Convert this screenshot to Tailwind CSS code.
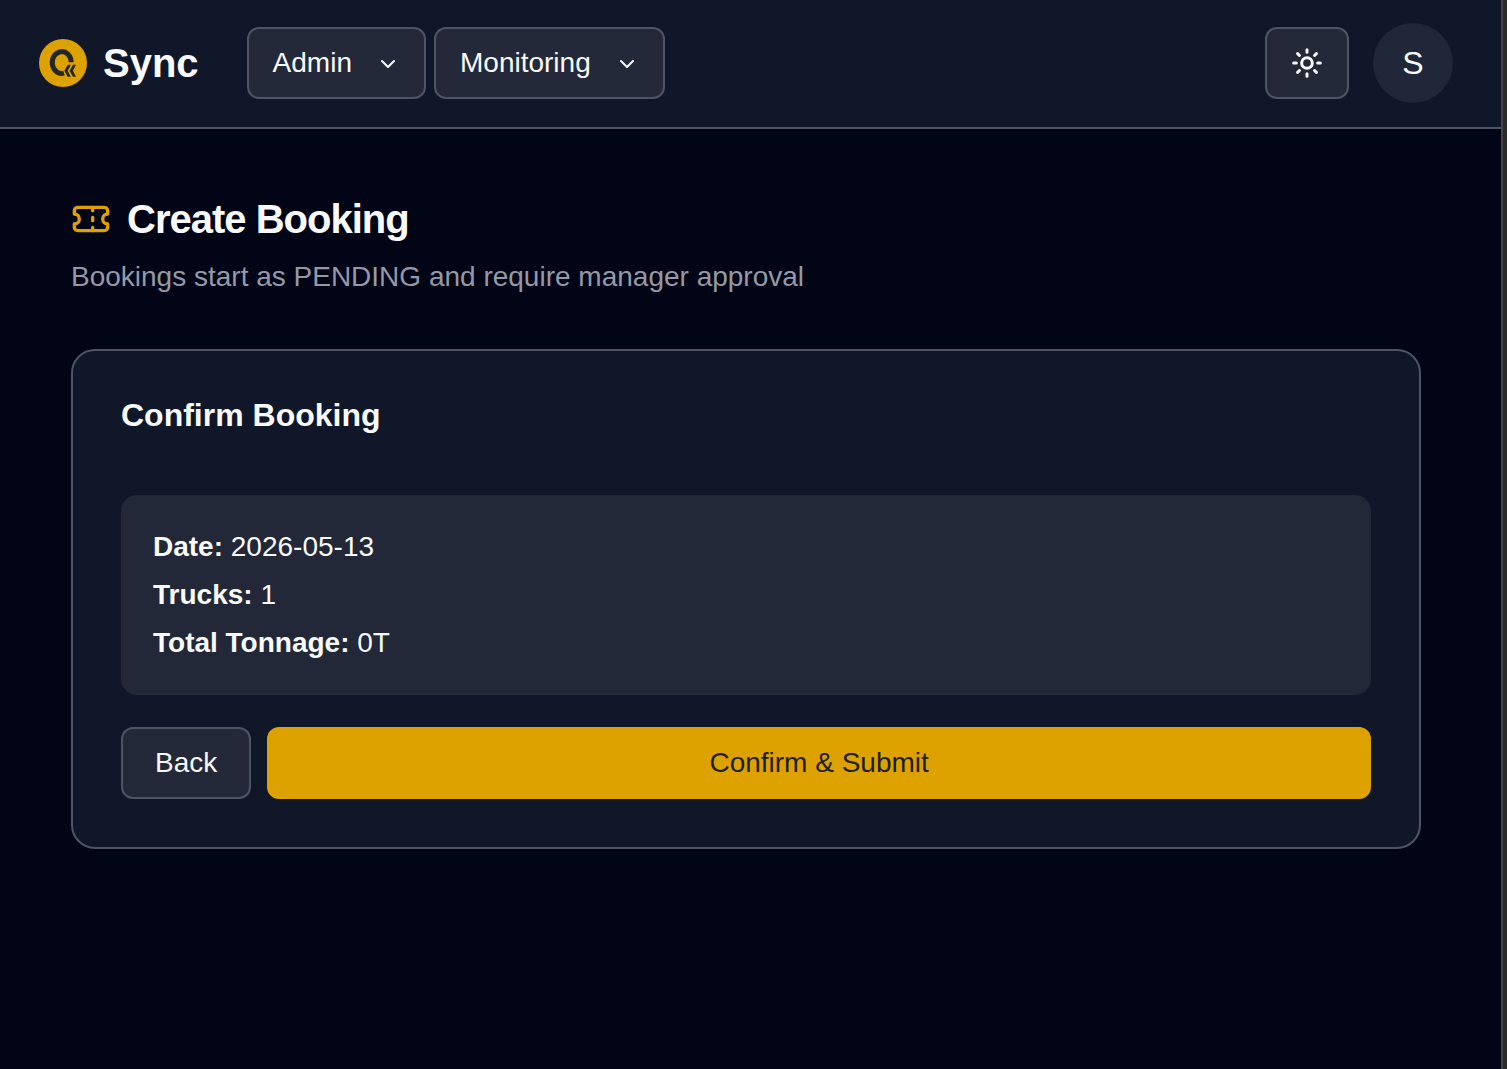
<!DOCTYPE html>
<html lang="en">
<head>
  <meta charset="UTF-8">
  <meta name="viewport" content="width=device-width, initial-scale=1.0">
  <title>Create Booking - Sync</title>
  <script src="https://cdn.jsdelivr.net/npm/@tailwindcss/browser@4"></script>
</head>
<body class="flex min-h-screen bg-[#020516] font-['Liberation_Sans',Arial,sans-serif] text-[28px] leading-10 text-[#f9fafb]">
  <div class="min-w-0 flex-1">
    <!-- Header -->
    <header class="flex items-center justify-between border-b-2 border-[#4b5563] bg-[#101728] pt-[23px] pr-12 pb-6 pl-[39px]">
      <div class="flex items-center">
        <a href="#" class="mr-12 flex items-center gap-4 text-[40px] font-bold">
          <svg class="size-12" viewBox="0 0 48 48" aria-hidden="true">
            <circle cx="24" cy="24" r="24" fill="#dea200"/>
            <path d="M32.2 23.2A9.5 10.9 0 1 0 25 34.1" fill="none" stroke="#262626" stroke-width="5"/>
            <path d="M28.8 25.7h3l-3.1 6 3.1 6h-3l-3.5-6zM34 25.7h3l-3.1 6 3.1 6h-3l-3.5-6z" fill="#262626"/>
          </svg>
          <span>Sync</span>
        </a>
        <nav class="flex gap-2">
          <button type="button" class="flex h-[72px] items-center gap-6 rounded-xl border-2 border-[#4b5563] bg-[#24293a] px-6">
            Admin
            <svg class="size-6" viewBox="0 0 24 24" fill="none" stroke="currentColor" stroke-width="2" stroke-linecap="round" stroke-linejoin="round" aria-hidden="true"><path d="m6 10 6 6 6-6"/></svg>
          </button>
          <button type="button" class="flex h-[72px] items-center gap-6 rounded-xl border-2 border-[#4b5563] bg-[#24293a] px-6">
            Monitoring
            <svg class="size-6" viewBox="0 0 24 24" fill="none" stroke="currentColor" stroke-width="2" stroke-linecap="round" stroke-linejoin="round" aria-hidden="true"><path d="m6 10 6 6 6-6"/></svg>
          </button>
        </nav>
      </div>
      <div class="flex items-center gap-6">
        <button type="button" aria-label="Toggle theme" class="flex h-[72px] w-[84px] items-center justify-center rounded-xl border-2 border-[#4b5563] bg-[#24293a]">
          <svg class="size-8" viewBox="0 0 24 24" fill="none" stroke="currentColor" stroke-width="2.25" stroke-linecap="round" stroke-linejoin="round" aria-hidden="true">
            <circle cx="12" cy="12" r="4"/>
            <path d="M12 2v2M12 20v2M4.93 4.93l1.41 1.41M17.66 17.66l1.41 1.41M2 12h2M20 12h2M6.34 17.66l-1.41 1.41M19.07 4.93l-1.41 1.41"/>
          </svg>
        </button>
        <button type="button" class="size-20 rounded-full bg-[#1f2739] text-[32px]">S</button>
      </div>
    </header>

    <!-- Main Content -->
    <main class="pt-16 pr-20 pb-16 pl-[71px]">
      <h1 class="flex items-center gap-4 text-[40px] leading-[52px] font-bold tracking-tight">
        <svg class="size-10" viewBox="0 0 24 24" fill="none" stroke="#dea200" stroke-width="2" stroke-linecap="round" stroke-linejoin="round" aria-hidden="true">
          <path d="M2 9a3 3 0 0 1 0 6v2a2 2 0 0 0 2 2h16a2 2 0 0 0 2-2v-2a3 3 0 0 1 0-6V7a2 2 0 0 0-2-2H4a2 2 0 0 0-2 2Z"/>
          <path d="M13 5v2M13 17v2M13 11v2"/>
        </svg>
        Create Booking
      </h1>
      <p class="mt-3 text-[#9599a6]">Bookings start as PENDING and require manager approval</p>

      <!-- Confirm card -->
      <section class="mt-[52px] rounded-3xl border-2 border-[#4b5563] bg-[#101728] p-12">
        <h2 class="text-[32px] leading-8 font-bold">Confirm Booking</h2>
        <div class="mt-16 space-y-2 rounded-2xl bg-[#222837] p-8">
          <p><strong>Date:</strong> 2026-05-13</p>
          <p><strong>Trucks:</strong> 1</p>
          <p><strong>Total Tonnage:</strong> 0T</p>
        </div>
        <div class="mt-8 flex gap-4">
          <button type="button" class="h-[72px] rounded-xl border-2 border-[#4b5563] bg-[#24293a] px-8">Back</button>
          <button type="submit" class="h-[72px] flex-1 rounded-xl bg-[#dea200] text-[#1f2023]">Confirm &amp; Submit</button>
        </div>
      </section>
    </main>
  </div>

  <!-- Scrollbar gutter -->
  <div class="w-[6px] border-l-2 border-[#444444] bg-[#2b2b2b]"></div>
</body>
</html>
